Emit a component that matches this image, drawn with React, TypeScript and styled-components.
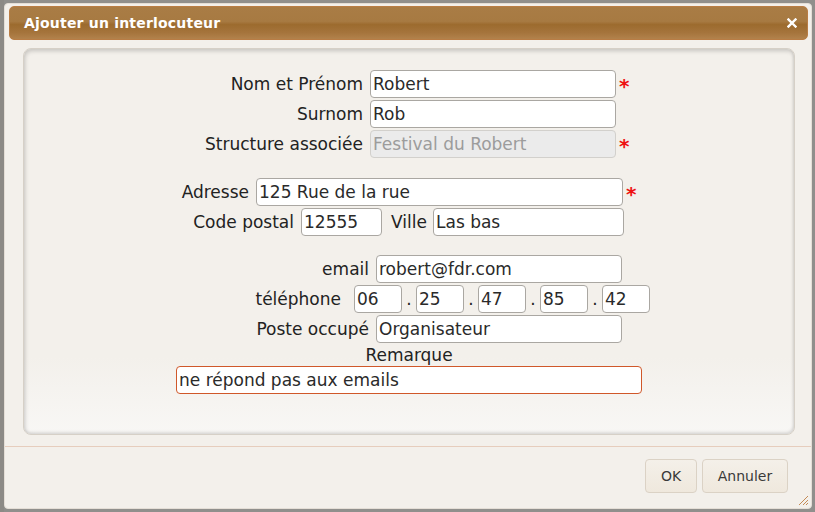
import React from "react";
import styled, { createGlobalStyle } from "styled-components";

const Global = createGlobalStyle`
  html, body { margin: 0; padding: 0; }
  body {
    width: 815px; height: 512px; overflow: hidden;
    background: #8e8d8b;
    font-family: "DejaVu Sans", Verdana, sans-serif;
  }
  * { box-sizing: border-box; }
`;

const Screen = styled.div`
  width: 815px;
  height: 512px;
  padding: 3px 3px 3px 4px;
  display: flex;
  background: linear-gradient(90deg, #8c8a86 0 4px, transparent 4px), #908f8c;
`;

const Dialog = styled.div`
  width: 808px;
  height: 506px;
  background: #f3f0eb;
  border: 1px solid #e4ded6;
  border-radius: 4px;
  padding: 2px 3px 0 4px;
  display: flex;
  flex-direction: column;
  position: relative;
`;

const TitleBar = styled.div`
  height: 34px;
  border-radius: 5px;
  border: 1px solid #b97d45;
  background: linear-gradient(
    180deg,
    #a97c45 0%,
    #a77a42 45%,
    #9c6b2e 55%,
    #a5743c 80%,
    #b2824c 100%
  );
  display: flex;
  align-items: center;
  justify-content: space-between;
  padding: 0 9px 0 14px;
`;

const Title = styled.span`
  color: #ffffff;
  font-weight: bold;
  font-size: 14px;
  letter-spacing: 0.2px;
`;

const CloseBtn = styled.button`
  border: none;
  background: transparent;
  padding: 0;
  width: 12px;
  height: 12px;
  display: flex;
  align-items: center;
  justify-content: center;
`;

const Panel = styled.div`
  margin: 8px 13px 0 14px;
  height: 387px;
  border: 1px solid #d6d0c7;
  border-radius: 8px;
  background: linear-gradient(180deg, #f3f0eb 0%, #f3f0eb 80%, #f8f7f5 100%);
  box-shadow: inset 1px 2px 4px rgba(0, 0, 0, 0.18), inset -1px -2px 3px rgba(0, 0, 0, 0.1);
  padding-top: 20px;
  display: flex;
  flex-direction: column;
`;

const Group = styled.div<{ $mt?: number }>`
  display: flex;
  flex-direction: column;
  margin-top: ${(p) => p.$mt ?? 0}px;
`;

const Row = styled.div<{ $indent?: number; $center?: boolean; $h?: number }>`
  height: ${(p) => p.$h ?? 30}px;
  display: flex;
  align-items: center;
  padding-left: ${(p) => p.$indent ?? 0}px;
  justify-content: ${(p) => (p.$center ? "center" : "flex-start")};
`;

const Label = styled.label<{ $w?: number; $gap?: number }>`
  width: ${(p) => (p.$w ? `${p.$w}px` : "auto")};
  margin-right: ${(p) => p.$gap ?? 7}px;
  text-align: right;
  font-size: 17px;
  color: #222;
  white-space: nowrap;
`;

const Input = styled.input<{ $w: number; $focus?: boolean }>`
  width: ${(p) => p.$w}px;
  height: 28px;
  border: 1px solid ${(p) => (p.$focus ? "#d0582a" : "#aaa7a2")};
  border-radius: 4px;
  background: #fff;
  padding: 0 2px;
  font-family: "DejaVu Sans", Verdana, sans-serif;
  font-size: 17px;
  color: #2a2a2a;
  outline: none;
  &:disabled {
    background: #ebebeb;
    border-color: #d2d0cc;
    color: #9c9c9c;
  }
`;

const Star = styled.span`
  color: #ee1111;
  font-size: 20px;
  font-weight: bold;
  margin-left: 3px;
  line-height: 1;
  padding-top: 3px;
`;

const Dot = styled.span`
  width: 14px;
  text-align: center;
  font-size: 17px;
  color: #222;
`;

const RemarkLabel = styled.div`
  height: 22px;
  text-align: center;
  font-size: 17px;
  color: #222;
  padding-top: 1px;
`;

const Separator = styled.div`
  height: 1px;
  background: #e6cdbd;
  margin: 11px -3px 0 -4px;
`;

const Footer = styled.div`
  display: flex;
  justify-content: flex-end;
  gap: 5px;
  padding: 12px 20px 0 0;
`;

const Button = styled.button<{ $w: number }>`
  width: ${(p) => p.$w}px;
  height: 34px;
  border: 1px solid #dbd2c5;
  border-radius: 4px;
  background: linear-gradient(180deg, #f4f0e9 0%, #efe8dd 100%);
  font-family: "DejaVu Sans", Verdana, sans-serif;
  font-size: 14px;
  color: #3a3a3a;
  padding: 0;
`;

const Grip = styled.svg`
  position: absolute;
  right: 2px;
  bottom: 2px;
`;

export default function App() {
  return (
    <>
      <Global />
      <Screen>
        <Dialog>
          <TitleBar>
            <Title>Ajouter un interlocuteur</Title>
            <CloseBtn aria-label="Fermer">
              <svg width="10" height="10" viewBox="0 0 10 10">
                <path d="M1.5 1.5 L8.5 8.5 M8.5 1.5 L1.5 8.5" stroke="#fff" strokeWidth="2.4" strokeLinecap="square" />
              </svg>
            </CloseBtn>
          </TitleBar>
          <Panel>
            <Group>
              <Row $indent={170}>
                <Label $w={169}>Nom et Prénom</Label>
                <Input $w={246} defaultValue="Robert" />
                <Star>*</Star>
              </Row>
              <Row $indent={170}>
                <Label $w={169}>Surnom</Label>
                <Input $w={246} defaultValue="Rob" />
              </Row>
              <Row $indent={170}>
                <Label $w={169}>Structure associée</Label>
                <Input $w={246} defaultValue="Festival du Robert" disabled />
                <Star>*</Star>
              </Row>
            </Group>
            <Group $mt={18}>
              <Row $indent={146}>
                <Label $w={79}>Adresse</Label>
                <Input $w={367} defaultValue="125 Rue de la rue" />
                <Star>*</Star>
              </Row>
              <Row $indent={160}>
                <Label $w={110}>Code postal</Label>
                <Input $w={81} defaultValue="12555" />
                <Label $w={45} $gap={6}>Ville</Label>
                <Input $w={191} defaultValue="Las bas" />
              </Row>
            </Group>
            <Group $mt={17}>
              <Row $indent={226}>
                <Label $w={119}>email</Label>
                <Input $w={246} defaultValue="robert@fdr.com" />
              </Row>
              <Row $indent={226}>
                <Label $w={91} $gap={13}>téléphone</Label>
                <Input $w={48} defaultValue="06" />
                <Dot>.</Dot>
                <Input $w={48} defaultValue="25" />
                <Dot>.</Dot>
                <Input $w={48} defaultValue="47" />
                <Dot>.</Dot>
                <Input $w={48} defaultValue="85" />
                <Dot>.</Dot>
                <Input $w={48} defaultValue="42" />
              </Row>
              <Row $indent={226}>
                <Label $w={119}>Poste occupé</Label>
                <Input $w={246} defaultValue="Organisateur" />
              </Row>
            </Group>
            <RemarkLabel>Remarque</RemarkLabel>
            <Row $center $h={28}>
              <Input $w={466} $focus defaultValue="ne répond pas aux emails" />
            </Row>
          </Panel>
          <Separator />
          <Footer>
            <Button $w={52}>OK</Button>
            <Button $w={86}>Annuler</Button>
          </Footer>
          <Grip width="13" height="13" viewBox="0 0 13 13">
            <path d="M12 3 L3 12 M12 7 L7 12 M12 10 L10 12" stroke="#c48a55" strokeWidth="1" />
          </Grip>
        </Dialog>
      </Screen>
    </>
  );
}
